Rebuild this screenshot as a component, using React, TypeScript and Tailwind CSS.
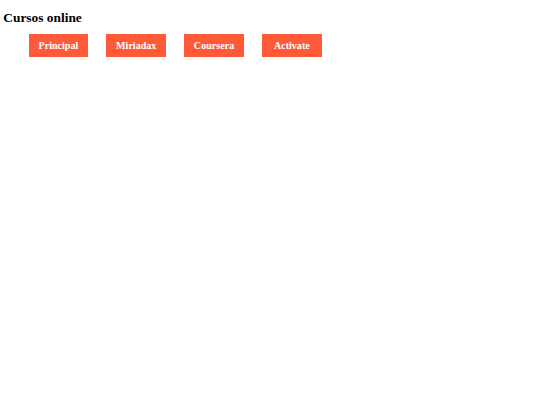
export default function App() {
  const items = ["Principal", "Miriadax", "Coursera", "Activate"];
  return (
    <div className="min-h-[405px] w-[540px] bg-white" style={{ fontFamily: '"Liberation Serif", "Times New Roman", serif' }}>
      <h1 className="pl-[3.3px] pt-[9.5px] text-[13.4px] font-bold leading-[15px] text-black">Cursos online</h1>
      <div className="mt-[9.2px] flex gap-[18.3px] pl-[28.7px]">
        {items.map((t) => (
          <div
            key={t}
            className="flex h-[23.6px] w-[59.5px] items-center justify-center bg-[#ff5a38] text-[10.1px] font-bold text-white"
          >
            {t}
          </div>
        ))}
      </div>
    </div>
  );
}
